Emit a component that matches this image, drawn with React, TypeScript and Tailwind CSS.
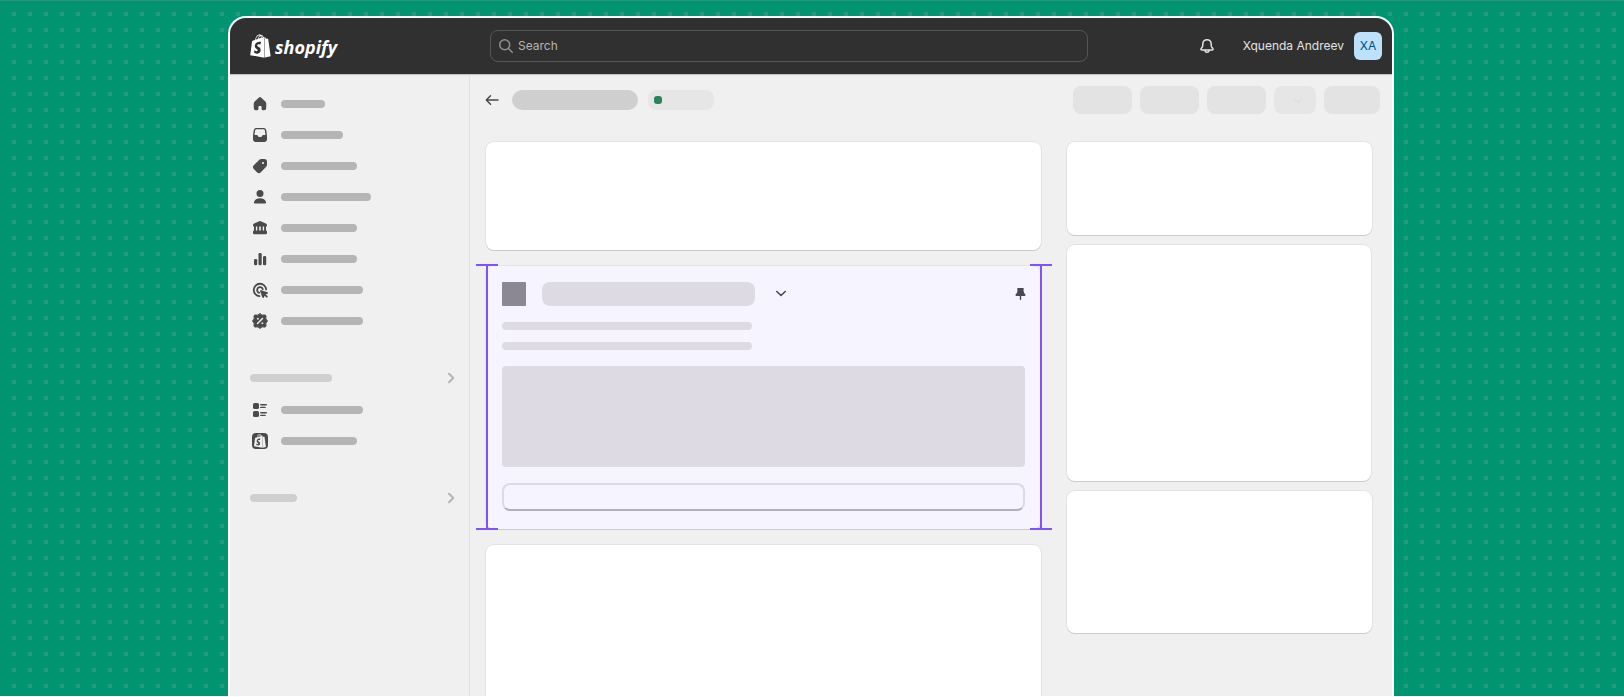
import { ReactNode } from 'react';
import clsx from 'clsx';
import { FaShopify } from 'react-icons/fa';

function Icon({ children, className }: { children: ReactNode; className?: string }) {
  return (
    <svg viewBox="0 0 20 20" fill="currentColor" aria-hidden="true" className={clsx('size-5 shrink-0', className)}>
      {children}
    </svg>
  );
}

const icons = {
  home: (
    <Icon>
      <path d="M8.700 3.700a1.900 1.900 0 0 1 2.600 0l4 3.800c.6.550.95 1.300.95 2.100v4.400a2.200 2.200 0 0 1-2.200 2.200h-1.350a1.100 1.100 0 0 1-1.100-1.100v-2.200a.9.900 0 0 0-.9-.9h-1.400a.9.900 0 0 0-.9.900v2.200a1.100 1.100 0 0 1-1.100 1.100H5.950a2.200 2.200 0 0 1-2.200-2.200V9.600c0-.8.350-1.550.95-2.100l4-3.800Z" />
    </Icon>
  ),
  orders: (
    <Icon>
      <path
        fillRule="evenodd"
        d="M6.400 3h7.200a2.700 2.700 0 0 1 2.700 2.350l.6 4.650c.07.4.1.8.1 1.200V14a3 3 0 0 1-3 3H6a3 3 0 0 1-3-3v-2.800c0-.4.03-.8.1-1.200l.6-4.650A2.700 2.700 0 0 1 6.400 3Zm.2 1.300c-.75 0-1.350.5-1.450 1.250L4.500 10h2.200a1.300 1.300 0 0 1 1.200.85l.2.5c.15.4.5.65.9.65h2c.4 0 .75-.25.9-.65l.2-.5a1.300 1.300 0 0 1 1.200-.85h2.200l-.65-4.450c-.1-.75-.7-1.250-1.450-1.250H6.600Z"
      />
    </Icon>
  ),
  products: (
    <Icon>
      <path
        fillRule="evenodd"
        d="M11.300 3h2.950A2.750 2.750 0 0 1 17 5.750V8.800c0 .73-.3 1.430-.8 1.940l-5.350 5.450a2.750 2.750 0 0 1-3.900 0L3.800 13.050a2.750 2.750 0 0 1 0-3.900L9.350 3.800C9.870 3.300 10.570 3 11.300 3ZM13 8.100a1.100 1.100 0 1 0 0-2.200 1.100 1.100 0 0 0 0 2.200Z"
      />
    </Icon>
  ),
  customers: (
    <Icon>
      <circle cx="10" cy="6.500" r="3.500" />
      <path d="M4 15.300C4.500 12.900 6.900 11.300 10 11.300s5.500 1.600 6 4c.15.700-.4 1.200-1.100 1.200H5.100c-.7 0-1.250-.5-1.100-1.200Z" />
    </Icon>
  ),
  finances: (
    <Icon>
      <path d="M9.200 3.250a2 2 0 0 1 1.600 0l5 2.150c.75.300 1.200 1 1.200 1.800 0 .700-.5 1.250-1.150 1.300H4.150C3.500 8.450 3 7.900 3 7.200c0-.8.450-1.500 1.200-1.800l5-2.150Z" />
      <path d="M4 8h1.900v5H4zM7.300 8h1.900v5H7.300zM10.800 8h1.900v5h-1.900zM14.100 8H16v5h-1.900z" />
      <rect x="3" y="12.500" width="14" height="3.700" rx="1.200" />
    </Icon>
  ),
  analytics: (
    <Icon>
      <rect x="8.500" y="4" width="3.200" height="12.200" rx="1.300" />
      <rect x="4" y="10" width="3.200" height="6.200" rx="1.300" />
      <rect x="13" y="7" width="3.200" height="9.200" rx="1.300" />
    </Icon>
  ),
  marketing: (
    <Icon>
      <g fill="none" stroke="currentColor" strokeWidth="1.800" strokeLinecap="round">
        <path d="M16.150 9.500A6.200 6.200 0 1 0 9.500 16.150" />
        <path d="M12.800 9.200a2.900 2.900 0 1 0-3.600 3.600" />
      </g>
      <path d="M10.150 11.250a.9.9 0 0 1 1.150-1.100l6.100 2.050c.8.280.82 1.350.05 1.650l-1.600.65 1.600 1.600a.85.85 0 0 1-1.250 1.250l-1.650-1.600-.65 1.650c-.3.800-1.400.75-1.650-.05l-2.100-6.100Z" />
    </Icon>
  ),
  discounts: (
    <Icon>
      <path d="m10 2.500 2 1.700 2.700-.3c.8 0 1.300.6 1.300 1.300l-.2 2.700 1.700 2.100-1.700 2.100.2 2.700c0 .7-.5 1.300-1.300 1.300l-2.700-.3-2 1.700-2-1.700-2.700.3c-.8 0-1.300-.6-1.300-1.300l.2-2.700L2.500 10l1.700-2.100L4 5.200c0-.7.5-1.300 1.300-1.300l2.700.3 2-1.700Z" stroke="currentColor" strokeWidth="1" strokeLinejoin="round" />
      <g stroke="#f0f0f0" fill="none" strokeLinecap="round">
        <path d="m7.500 12.500 5-5" strokeWidth="1.500" />
        <circle cx="7.800" cy="7.800" r=".5" strokeWidth="1" />
        <circle cx="12.200" cy="12.200" r=".5" strokeWidth="1" />
      </g>
    </Icon>
  ),
  blocks: (
    <Icon>
      <rect x="3" y="3" width="6" height="6" rx="1.600" />
      <rect x="3" y="11" width="6" height="6" rx="1.600" />
      <g stroke="currentColor" strokeWidth="1.400" strokeLinecap="round">
        <path d="M10.800 4.700h5.500M10.800 7.400h4.200M10.800 12.700h5.500M10.800 15.400h4.200" />
      </g>
    </Icon>
  ),
};

const mainNav = [
  { label: 'Home', icon: icons.home, bar: 'w-11' },
  { label: 'Orders', icon: icons.orders, bar: 'w-[62px]' },
  { label: 'Products', icon: icons.products, bar: 'w-[76px]' },
  { label: 'Customers', icon: icons.customers, bar: 'w-[90px]' },
  { label: 'Finances', icon: icons.finances, bar: 'w-[76px]' },
  { label: 'Analytics', icon: icons.analytics, bar: 'w-[76px]' },
  { label: 'Marketing', icon: icons.marketing, bar: 'w-[82px]' },
  { label: 'Discounts', icon: icons.discounts, bar: 'w-[82px]' },
];

const channelNav = [
  { label: 'Online Store', icon: icons.blocks, bar: 'w-[82px]' },
  {
    label: 'Shop',
    icon: (
      <span className="mx-0.5 flex size-4 items-center justify-center rounded bg-[#4a4a4a]">
        <FaShopify className="size-3.5 text-[#f0f0f0]" />
      </span>
    ),
    bar: 'w-[76px]',
  },
];

const actions = [
  { label: 'Duplicate', size: 'w-[59px] bg-[#e3e3e3]' },
  { label: 'View', size: 'w-[59px] bg-[#e3e3e3]' },
  { label: 'Share', size: 'w-[59px] bg-[#e3e3e3]' },
  { label: 'More actions', size: 'w-[42px] bg-[#e6e6e6]', menu: true },
  { label: 'Save', size: 'w-14 bg-[#e3e3e3]' },
];

function NavList({ items }: { items: typeof mainNav }) {
  return (
    <ul>
      {items.map((item) => (
        <li key={item.label}>
          <a href="#" aria-label={item.label} className="flex h-[31px] items-center gap-[11px] text-[#4a4a4a]">
            {item.icon}
            <span className={clsx('h-2 rounded-full bg-[#b5b5b5]', item.bar)} />
          </a>
        </li>
      ))}
    </ul>
  );
}

function NavSection({ label, bar }: { label: string; bar: string }) {
  return (
    <button type="button" aria-label={label} className="flex h-5 w-full items-center justify-between">
      <span className={clsx('h-2 rounded-full bg-[#cfcfcf]', bar)} />
      <Icon className="text-[#b5b5b5]">
        <path d="m8 5.700 4.300 4.300L8 14.300" fill="none" stroke="currentColor" strokeWidth="2" strokeLinecap="round" strokeLinejoin="round" />
      </Icon>
    </button>
  );
}

function TopBar() {
  return (
    <header className="z-10 grid h-14 shrink-0 grid-cols-[240px_minmax(0,598px)_1fr] items-center bg-[#303030] pr-2.5 pl-5 shadow-[0_1px_1px_#c4c4c4]">
      <a href="#" className="flex items-center gap-1 text-white">
        <FaShopify className="h-6 w-[21px]" />
        <span className="pt-0.5 font-['Open_Sans'] text-lg leading-6 font-bold italic">shopify</span>
      </a>
      <label className="flex h-8 items-center gap-0.5 rounded-lg border border-[#555] px-[5px]">
        <Icon className="text-[#8f8f8f]">
          <g fill="none" stroke="currentColor" strokeWidth="1.500" strokeLinecap="round">
            <circle cx="8.700" cy="8.700" r="5" />
            <path d="m12.500 12.500 3.700 3.700" />
          </g>
        </Icon>
        <input
          type="search"
          aria-label="Search"
          placeholder="Search"
          className="min-w-0 flex-1 bg-transparent text-xs text-white outline-none placeholder:text-[#b5b5b5]"
        />
      </label>
      <div className="flex items-center justify-end gap-2.5">
        <button type="button" aria-label="Notifications" className="mr-4 text-[#e3e3e3]">
          <Icon>
            <g fill="none" stroke="currentColor" strokeWidth="1.500" strokeLinejoin="round">
              <path d="M10 3.700c-2.300 0-4 1.700-4.150 3.900l-.15 2.100c-.05.600-.25 1.100-.6 1.600l-1 1.300c-.45.600-.05 1.400.7 1.400h10.400c.75 0 1.150-.8.700-1.400l-1-1.300c-.35-.5-.55-1-.6-1.600l-.15-2.100C14 5.400 12.300 3.700 10 3.700Z" />
              <path d="M8 14v.3a2 2 0 0 0 4 0V14" />
            </g>
          </Icon>
        </button>
        <span className="text-xs text-[#e3e3e3]">Xquenda Andreev</span>
        <span className="flex size-7 items-center justify-center rounded-md bg-[#bde0ff] text-xs text-[#00527c]">
          XA
        </span>
      </div>
    </header>
  );
}

function Card({ className, children }: { className?: string; children?: ReactNode }) {
  return (
    <section
      className={clsx('rounded-lg shadow-[0_1px_0_#cccccc,0_0_0_1px_#e3e3e3]', className)}
    >
      {children}
    </section>
  );
}

// I-beam marker running down one edge of the highlighted block
function EdgeMarker({ side }: { side: 'left' | 'right' }) {
  return (
    <div
      className={clsx(
        'absolute -top-0.5 -bottom-px flex w-[22px] flex-col items-center',
        side === 'left' ? '-left-2.5' : '-right-[11px]'
      )}
    >
      <span className="h-0.5 w-full bg-[#8051ff]" />
      <span className="w-0.5 flex-1 bg-[#8051ff]" />
      <span className="h-0.5 w-full bg-[#8051ff]" />
    </div>
  );
}

function AppBlock() {
  return (
    <Card className="relative bg-[#f6f4ff] p-4 pb-[18px]">
      <EdgeMarker side="left" />
      <EdgeMarker side="right" />
      <div className="flex items-center">
        <span className="size-6 rounded-[1px] bg-[#8b8893]" />
        <span className="ml-4 h-6 w-[213px] rounded-lg bg-[#dddae4]" />
        <button type="button" aria-label="Toggle block" className="ml-4 text-[#4a4855]">
          <Icon>
            <path d="m5.800 7.500 4.200 4 4.200-4" fill="none" stroke="currentColor" strokeWidth="1.600" strokeLinecap="round" strokeLinejoin="round" />
          </Icon>
        </button>
        <button type="button" aria-label="Pin block" className="-mr-1.5 ml-auto text-[#4a4855]">
          <Icon>
            <path d="M7 4h5a.8.8 0 0 1 .8.9l-.3 1.300a1 1 0 0 0 .1.700l.6 2.300c.9.500 1.300 1.100 1.300 1.900 0 .6-.4.900-.9.900h-3.400v3.300a.7.700 0 0 1-1.400 0V12H5.400c-.5 0-.9-.3-.9-.9 0-.8.400-1.400 1.300-1.900l.6-2.300a1 1 0 0 0 .1-.7l-.3-1.300A.8.8 0 0 1 7 4Z" />
          </Icon>
        </button>
      </div>
      <div className="mt-4 h-2 w-[250px] rounded-full bg-[#dddae4]" />
      <div className="mt-3 h-2 w-[250px] rounded-full bg-[#dddae4]" />
      <div className="mt-4 h-[101px] rounded bg-[#dddae4]" />
      <button
        type="button"
        aria-label="Block action"
        className="mt-4 block h-7 w-full rounded-lg border-2 border-[#dddae4] border-b-[#b3b0bd]"
      />
    </Card>
  );
}

export default function App() {
  return (
    <div className="h-screen overflow-hidden bg-white pb-px font-['Inter',sans-serif]">
      <div className="flex h-full justify-center overflow-hidden border-t border-[#1f9b7c] bg-[#009470] bg-[conic-gradient(from_270deg_at_4px_4px,#239c7e_25%,transparent_0)] bg-[size:16px_16px] bg-[position:12px_11px] pt-[15px] pr-0.5">
        <div className="flex w-full max-w-[1166px] flex-col overflow-hidden rounded-t-[18px] border-2 border-b-0 border-white bg-[#f0f0f0]">
          <TopBar />
          <div className="flex min-h-0 flex-1">
            <nav className="w-60 shrink-0 border-r border-[#e3e3e3] pt-3.5 pr-2 pl-5">
              <NavList items={mainNav} />
              <div className="mt-8 mb-1.5">
                <NavSection label="Sales channels" bar="w-[82px]" />
              </div>
              <NavList items={channelNav} />
              <div className="mt-8">
                <NavSection label="Apps" bar="w-[47px]" />
              </div>
            </nav>

            <main className="min-w-0 flex-1 overflow-hidden">
              <div className="flex items-center pt-3 pr-3 pl-3">
                <button type="button" aria-label="Back" className="text-[#4a4a4a]">
                  <Icon>
                    <path d="M16 10H4.500M8.500 5.800 4.300 10l4.200 4.200" fill="none" stroke="currentColor" strokeWidth="1.500" strokeLinecap="round" strokeLinejoin="round" />
                  </Icon>
                </button>
                <span className="ml-2.5 h-5 w-[126px] rounded-full bg-[#cfcfcf]" />
                <span className="ml-2.5 flex h-5 w-[66px] items-center rounded-lg bg-[#e6e6e6] pl-1.5">
                  <span className="size-2 rounded-[3px] bg-[#29845a]" />
                </span>
                <div className="ml-auto flex gap-2">
                  {actions.map((action) => (
                    <button
                      key={action.label}
                      type="button"
                      aria-label={action.label}
                      className={clsx('flex h-7 items-center justify-end rounded-lg pr-2', action.size)}
                    >
                      {action.menu && (
                        <Icon className="text-[#dfdfdf]">
                          <path d="m6 8.500 4 4 4-4" fill="none" stroke="currentColor" strokeWidth="1.500" strokeLinecap="round" strokeLinejoin="round" />
                        </Icon>
                      )}
                    </button>
                  ))}
                </div>
              </div>

              <div className="grid grid-cols-[minmax(0,1fr)_305px] gap-[26px] pt-7 pr-5 pl-4">
                <div className="flex flex-col gap-4">
                  <Card className="h-[108px] bg-white" />
                  <AppBlock />
                  <Card className="h-60 bg-white" />
                </div>
                <div className="flex flex-col gap-2.5">
                  <Card className="h-[93px] bg-white" />
                  <Card className="mr-px h-[236px] bg-white" />
                  <Card className="h-[142px] bg-white" />
                </div>
              </div>
            </main>
          </div>
        </div>
      </div>
    </div>
  );
}
